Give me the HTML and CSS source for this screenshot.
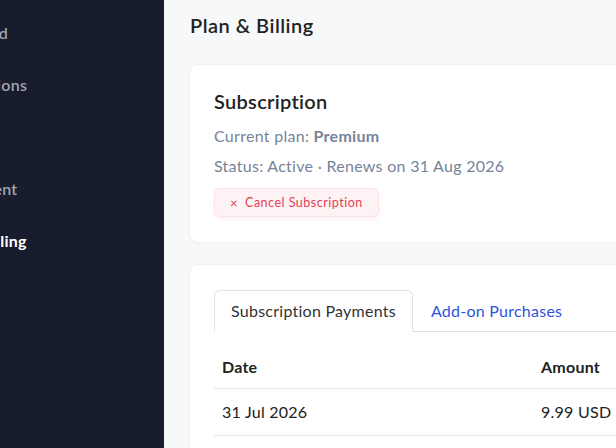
FILE: index.html
```html
<!DOCTYPE html>
<html lang="en">
<head>
<meta charset="utf-8">
<title>Plan &amp; Billing</title>
<link rel="stylesheet" href="styles.css">
</head>
<body>
<div class="app">
  <aside class="sidebar">
    <nav class="nav">
      <a class="nav-item">Dashboard</a>
      <a class="nav-item">Subscriptions</a>
      <a class="nav-item">Users</a>
      <a class="nav-item">Department</a>
      <a class="nav-item active">Plan &amp; Billing</a>
    </nav>
  </aside>
  <main class="main">
    <h1 class="page-title">Plan &amp; Billing</h1>
    <section class="card sub-card">
      <h2 class="card-title">Subscription</h2>
      <p class="meta">Current plan: <strong>Premium</strong></p>
      <p class="meta">Status: Active · Renews on 31 Aug 2026</p>
      <button class="btn-cancel"><span class="x">×</span>Cancel Subscription</button>
    </section>
    <section class="card pay-card">
      <div class="tabs">
        <div class="tab active">Subscription Payments</div>
        <div class="tab link">Add-on Purchases</div>
        <div class="tab-fill"></div>
      </div>
      <table class="table">
        <thead>
          <tr><th class="c-date">Date</th><th class="c-amt">Amount</th></tr>
        </thead>
        <tbody>
          <tr><td class="c-date">31 Jul 2026</td><td class="c-amt">9.99 USD</td></tr>
          <tr><td class="c-date">30 Jun 2026</td><td class="c-amt">9.99 USD</td></tr>
        </tbody>
      </table>
    </section>
  </main>
</div>
</body>
</html>
```

FILE: styles.css
```css
* { box-sizing: border-box; }
html, body { margin: 0; padding: 0; height: 100%; }
body {
  font-family: "Lato", "Open Sans", sans-serif;
  background: #f7f8fa;
  color: #222;
  overflow: hidden;
  letter-spacing: 0.25px;
}
.app { display: flex; height: 448px; width: 616px; overflow: hidden; }
.sidebar {
  width: 164px;
  flex: 0 0 164px;
  background: #171c2e;
  overflow: hidden;
}
.nav {
  display: flex;
  flex-direction: column;
  margin-left: -71px;
  padding-top: 22px;
  gap: 30px;
}
.nav-item {
  display: block;
  white-space: nowrap;
  font-size: 16px;
  line-height: 22px;
  color: #a2a5ae;
  font-weight: 600;
}
.nav-item.active { color: #ffffff; font-weight: 700; }

.main {
  flex: 1;
  padding: 10px 0 0 26px;
  min-width: 0;
}
.page-title {
  margin: 0 0 25px;
  font-size: 20px;
  line-height: 30px;
  font-weight: 600;
  letter-spacing: 0.5px;
  color: #222;
}
.card {
  background: #fff;
  border-radius: 8px 0 0 8px;
  box-shadow: 0 0 0 1px #eef0f3, 0 1px 2px rgba(0,0,0,0.03);
  margin-right: -20px;
}
.sub-card { padding: 22px 24px 24px 24px; height: 177px; margin-bottom: 23px; }
.card-title {
  margin: 0 0 10px;
  font-size: 20px;
  line-height: 28px;
  font-weight: 600;
  letter-spacing: 0.3px;
  color: #222;
}
.meta {
  margin: 0 0 8px;
  font-size: 16px;
  line-height: 22px;
  letter-spacing: 0.28px;
  color: #76839a;
}
.meta strong { font-weight: 700; }
.btn-cancel {
  margin-top: 3px;
  display: inline-flex;
  align-items: center;
  gap: 7px;
  height: 29px;
  padding: 0 15px;
  border: 1px solid #fbe3e6;
  border-radius: 6px;
  background: #fdf3f4;
  color: #e53e57;
  font-family: inherit;
  font-size: 12.5px;
  letter-spacing: 0.5px;
  box-shadow: 0 2px 4px rgba(229, 62, 87, 0.08);
}
.btn-cancel .x { font-size: 13px; }

.pay-card { padding: 25px 0 0 24px; height: 200px; }
.tabs { display: flex; align-items: flex-end; }
.tab {
  font-size: 16px;
  line-height: 20px;
  padding: 10px 16px 10px;
}
.tab.active {
  border: 1px solid #dee2e6;
  border-bottom-color: #fff;
  border-radius: 6px 6px 0 0;
  color: #333;
  background: #fff;
}
.tab.link { color: #2f54e0; border-bottom: 1px solid #dee2e6; padding: 10px 18px 10px 18px; }
.tab-fill { flex: 1; border-bottom: 1px solid #dee2e6; align-self: stretch; }
.table { border-collapse: collapse; width: 100%; margin-top: 0; }
.table th, .table td {
  text-align: left;
  font-size: 16px;
  padding: 0 8px;
  border-bottom: 1px solid #e2e5ea;
}
.table th { height: 56px; font-weight: 700; padding-top: 13px; color: #222; }
.table td { height: 47px; color: #222; }
.c-date { width: 319px; }
```
